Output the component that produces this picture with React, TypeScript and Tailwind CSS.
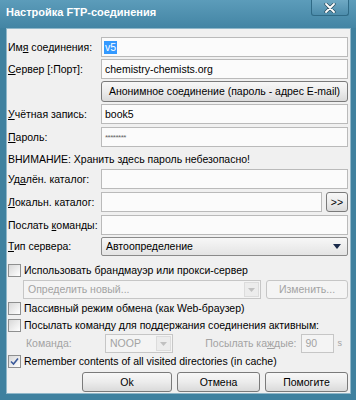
import React from "react";

const font = { fontFamily: '"Liberation Sans", Arial, sans-serif' };

function Field({ children, className = "" }: { children?: React.ReactNode; className?: string }) {
  return (
    <div
      className={`h-[20px] bg-[#fbfbfb] border border-[#bababa] px-[3px] flex items-center whitespace-nowrap ${className}`}
    >
      {children}
    </div>
  );
}

function Btn({ children, className = "", disabled = false }: { children: React.ReactNode; className?: string; disabled?: boolean }) {
  return (
    <div
      className={`flex items-center justify-center rounded-[3px] border whitespace-nowrap ${
        disabled
          ? "border-[#c6c6c6] bg-[#f4f4f4] text-[#a3a3a3]"
          : "border-[#7a7a7a] bg-gradient-to-b from-[#f7f7f7] via-[#ececec] to-[#dadada] text-black"
      } ${className}`}
    >
      {children}
    </div>
  );
}

function Check({ checked = false }: { checked?: boolean }) {
  return (
    <div className="w-[13px] h-[13px] border border-[#8e8f8f] bg-gradient-to-br from-[#d8d8d8] to-white flex items-center justify-center shrink-0">
      {checked && (
        <svg width="9" height="9" viewBox="0 0 9 9">
          <path d="M1 4.5 L3.5 7 L8 1.5" stroke="#3b5a9a" strokeWidth="1.6" fill="none" />
        </svg>
      )}
    </div>
  );
}

function Label({ children }: { children: React.ReactNode }) {
  return <div className="w-[93px] shrink-0 whitespace-nowrap">{children}</div>;
}

export default function App() {
  return (
    <div style={font} className="w-[356px] h-[400px] bg-[#3f819f] flex flex-col overflow-hidden">
      {/* title bar */}
      <div className="h-[28px] shrink-0 flex items-start bg-gradient-to-b from-[#5c9cba] to-[#4385a4] pl-[6px]">
        <div className="pt-[6px] text-white font-bold text-[11px] leading-[13px] whitespace-nowrap">
          Настройка FTP-соединения
        </div>
        <div className="ml-auto mr-[7px] w-[38px] h-[16px] rounded-b-[3px] border border-t-0 border-[#2f6a86] bg-gradient-to-b from-[#6fa9c4] to-[#4c8cab] flex items-center justify-center">
          <svg width="12" height="10" viewBox="0 0 12 10">
            <path d="M2 1 L10 9 M10 1 L2 9" stroke="#2a4a5a" strokeWidth="3.2" strokeLinecap="round" />
            <path d="M2 1 L10 9 M10 1 L2 9" stroke="#ffffff" strokeWidth="1.8" strokeLinecap="round" />
          </svg>
        </div>
      </div>
      {/* client */}
      <div className="flex-1 ml-[6px] mr-[5px] mb-[6px] bg-[#f0f0f0] border border-[#8fb7c9] pl-[1px] pr-[2px] pt-[8px] flex flex-col text-[10.5px] leading-[13px] text-black">
        <div className="flex items-center">
          <Label>
            Им<span className="underline">я</span> соединения:
          </Label>
          <Field className="flex-1">
            <span className="bg-[#3399ff] text-white px-[1px] -ml-[1px]">v5</span>
          </Field>
        </div>
        <div className="flex items-center mt-[2px]">
          <Label>
            <span className="underline">С</span>ервер [:Порт]:
          </Label>
          <Field className="flex-1">chemistry-chemists.org</Field>
        </div>
        <div className="flex mt-[2px]">
          <div className="w-[93px] shrink-0" />
          <Btn className="flex-1 h-[21px]">Анонимное соединение (пароль - адрес E-mail)</Btn>
        </div>
        <div className="flex items-center mt-[2px]">
          <Label>
            <span className="underline">У</span>чётная запись:
          </Label>
          <Field className="flex-1">book5</Field>
        </div>
        <div className="flex items-center mt-[3px]">
          <Label>
            <span className="underline">П</span>ароль:
          </Label>
          <Field className="flex-1">
            <span className="text-[8px] text-[#666] tracking-[-0.5px]">********</span>
          </Field>
        </div>
        <div className="mt-[3px] h-[19px] flex items-center whitespace-nowrap">
          ВНИМАНИЕ: Хранить здесь пароль небезопасно!
        </div>
        <div className="flex items-center">
          <Label>
            Уд<span className="underline">а</span>лён. каталог:
          </Label>
          <Field className="flex-1" />
        </div>
        <div className="flex items-center mt-[3px]">
          <Label>
            <span className="underline">Л</span>окальн. каталог:
          </Label>
          <Field className="flex-1" />
          <Btn className="w-[22px] h-[20px] ml-[4px]">&gt;&gt;</Btn>
        </div>
        <div className="flex items-center mt-[3px]">
          <Label>
            Послать <span className="underline">к</span>оманды:
          </Label>
          <Field className="flex-1" />
        </div>
        <div className="flex items-center mt-[2px]">
          <Label>
            <span className="underline">Т</span>ип сервера:
          </Label>
          <div className="flex-1 h-[19px] bg-gradient-to-b from-[#f7f7f7] to-[#e4e4e4] border border-[#8a8a8a] rounded-[2px] flex items-center pl-[4px] pr-[6px]">
            <span>Автоопределение</span>
            <svg className="ml-auto" width="8" height="5" viewBox="0 0 8 5">
              <path d="M0 0 H8 L4 5 Z" fill="#1a2a4a" />
            </svg>
          </div>
        </div>
        <div className="flex items-center gap-[3px] mt-[6px] h-[16px] whitespace-nowrap">
          <Check />
          <span>Использовать брандмауэр или прокси-сервер</span>
        </div>
        <div className="flex items-center mt-[2px] pl-[15px]">
          <div className="w-[238px] h-[19px] border border-[#c6c6c6] bg-[#f4f4f4] flex items-center pl-[4px] text-[#a3a3a3]">
            <span>Определить новый...</span>
            <div className="ml-auto w-[15px] h-[15px] mr-[1px] bg-[#ececec] border border-[#dcdcdc] flex items-center justify-center">
              <svg width="7" height="4" viewBox="0 0 7 4">
                <path d="M0 0 H7 L3.5 4 Z" fill="#c0c0c0" />
              </svg>
            </div>
          </div>
          <Btn disabled className="ml-auto w-[82px] h-[19px]">
            Изменить...
          </Btn>
        </div>
        <div className="flex items-center gap-[3px] mt-[1px] h-[16px] whitespace-nowrap">
          <Check />
          <span>Пассивный режим обмена (как Web-браузер)</span>
        </div>
        <div className="flex items-center gap-[3px] mt-[1px] h-[16px] whitespace-nowrap">
          <Check />
          <span>Посылать команду для поддержания соединения активным:</span>
        </div>
        <div className="flex items-center mt-[1px] h-[19px] whitespace-nowrap">
          <span className="pl-[18px] w-[97px] text-[#a3a3a3]">
            Коман<span className="underline">д</span>а:
          </span>
          <div className="w-[68px] h-[19px] border border-[#c6c6c6] bg-[#f4f4f4] flex items-center pl-[4px] text-[#a3a3a3]">
            <span>NOOP</span>
            <div className="ml-auto w-[15px] h-[15px] mr-[1px] bg-[#ececec] border border-[#dcdcdc] flex items-center justify-center">
              <svg width="7" height="4" viewBox="0 0 7 4">
                <path d="M0 0 H7 L3.5 4 Z" fill="#c0c0c0" />
              </svg>
            </div>
          </div>
          <span className="ml-auto text-[#a3a3a3]">
            Посылать ка<span className="underline">ж</span>дые:
          </span>
          <div className="ml-[4px] w-[33px] h-[19px] border border-[#c6c6c6] bg-[#f4f4f4] pl-[4px] flex items-center text-[#a3a3a3]">
            90
          </div>
          <span className="ml-[4px] mr-[6px] text-[#a3a3a3] text-[9px]">s</span>
        </div>
        <div className="flex items-center gap-[3px] h-[16px] whitespace-nowrap">
          <Check checked />
          <span>Remember contents of all visited directories (in cache)</span>
        </div>
        <div className="flex justify-end gap-[5px] mt-[3px]">
          <Btn className="w-[90px] h-[20px]">Ok</Btn>
          <Btn className="w-[83px] h-[20px]">Отмена</Btn>
          <Btn className="w-[83px] h-[20px]">Помогите</Btn>
        </div>
      </div>
    </div>
  );
}
